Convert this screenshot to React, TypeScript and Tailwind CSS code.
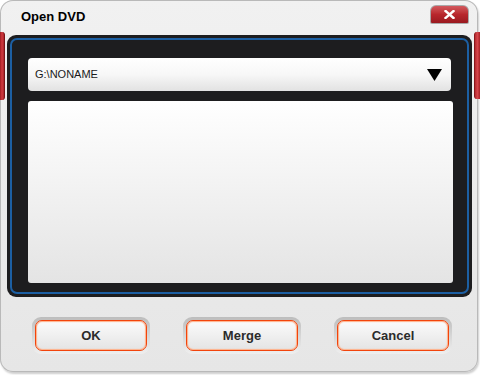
import React from 'react';

const FONT = "font-['Liberation_Sans',Arial,sans-serif]";

function DialogButton({ label }: { label: string }) {
  return (
    <div className="w-[118px] h-[37px] rounded-[9px] p-[3px] bg-gradient-to-b from-[#bdbdbd] to-[#efefef]">
      <button
        className={`w-full h-full rounded-[7px] border-[1.5px] border-[#f2440c] shadow-[inset_0_0_1px_1px_#ffb088] bg-gradient-to-b from-[#fbfbfb] to-[#e4e4e4] text-[13px] font-bold text-[#2b2b2b] ${FONT}`}
      >
        {label}
      </button>
    </div>
  );
}

export default function App() {
  return (
    <div className="w-[480px] h-[375px] bg-white overflow-hidden">
      <div className="w-[478px] h-[372px] rounded-[13px] bg-gradient-to-b from-[#f1f1f1] to-[#e6e6e6] shadow-[inset_0_0_0_1px_#b9b9b9,1px_2px_2px_#cfcfcf] flex flex-col">
        {/* Title bar */}
        <div className="h-[32px] flex items-center justify-between pl-[21px] pr-[9px] pt-[2px]">
          <span className={`text-[13px] font-bold text-black ${FONT}`}>Open DVD</span>
          <div className="mt-[-6px] rounded-t-[6px] rounded-b-[2px] p-[1px] bg-[#a9a9a9]">
            <div className="w-[37px] h-[17px] rounded-t-[5px] rounded-b-[1px] bg-gradient-to-b from-[#d2585d] via-[#b8262c] to-[#9a1a20] flex items-center justify-center">
              <svg width="11" height="9" viewBox="0 0 11 9">
                <path d="M1.5 1 L9.5 8 M9.5 1 L1.5 8" stroke="white" strokeWidth="2.4" strokeLinecap="square" />
              </svg>
            </div>
          </div>
        </div>

        {/* Body with side tabs */}
        <div className="flex items-start gap-[2px] w-[480px]">
          <div className="w-[5px] h-[68px] rounded-r-[3px] bg-gradient-to-r from-[#9e1a1f] via-[#d23a40] to-[#a8252a] border-r border-[#7a1216]" />
          <div className="mt-[3px] w-[465px] h-[262px] rounded-[9px] bg-[#1d1d1f] p-[3px]">
            <div className="w-full h-full rounded-[7px] border-2 border-[#1c5fa3] px-[16px] pt-[18px] pb-[9px] flex flex-col">
              <div className="h-[33px] w-[423px] rounded-[4px] bg-gradient-to-b from-white via-[#f7f7f7] to-[#e2e2e2] flex items-center justify-between pl-[7px] pr-[9px]">
                <span className={`text-[11px] text-[#1a1a1a] ${FONT}`}>G:\NONAME</span>
                <svg width="15" height="12" viewBox="0 0 15 12">
                  <path d="M0 0 H15 L7.5 12 Z" fill="black" />
                </svg>
              </div>
              <div className="mt-[10px] flex-1 w-[425px] rounded-[3px] bg-gradient-to-b from-white to-[#e4e4e4]" />
            </div>
          </div>
          <div className="w-[6px] h-[67px] rounded-l-[3px] bg-gradient-to-r from-[#b52a30] via-[#d6454b] to-[#a81f25] border-l border-[#8a161b]" />
        </div>

        {/* Buttons */}
        <div className="mt-[20px] flex pl-[32px] gap-[33px]">
          <DialogButton label="OK" />
          <DialogButton label="Merge" />
          <DialogButton label="Cancel" />
        </div>
      </div>
    </div>
  );
}
